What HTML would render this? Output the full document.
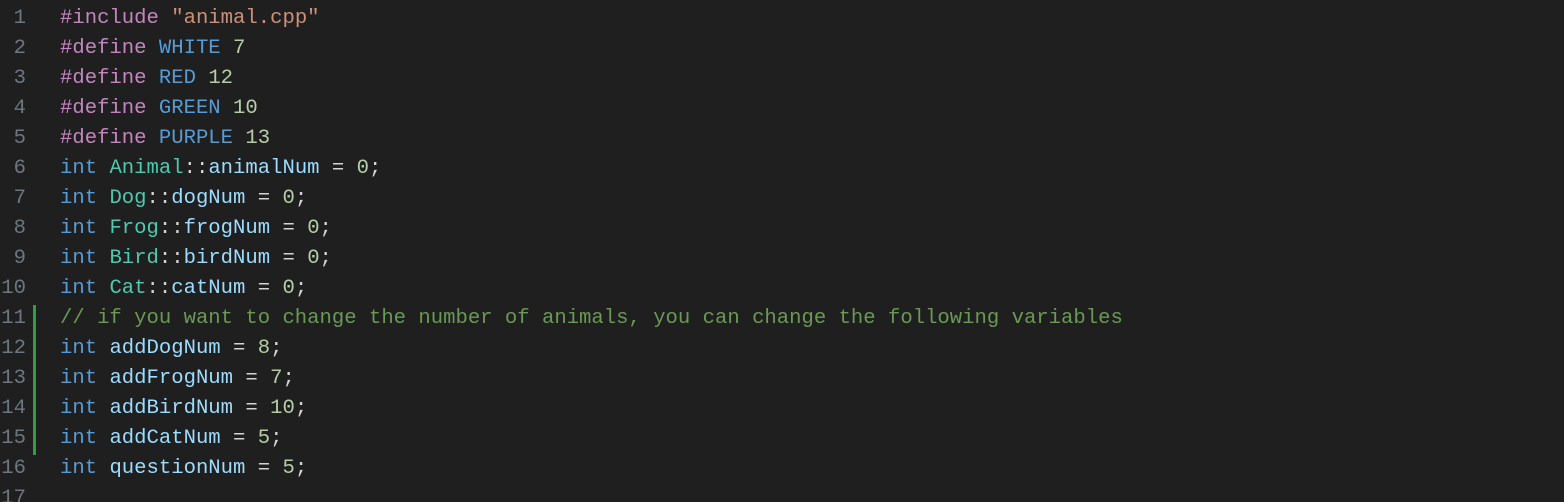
<!DOCTYPE html>
<html><head><style>
html,body{margin:0;padding:0;background:#1f1f1f;width:1564px;height:502px;overflow:hidden}
.ed{position:relative;font-family:"Liberation Mono","DejaVu Sans Mono",monospace;font-size:20.6px;}
.ln{position:absolute;left:0;width:26px;text-align:right;color:#6e7681;height:30px;line-height:30px;white-space:pre}
.c{position:absolute;left:60px;height:30px;line-height:30px;white-space:pre;color:#d4d4d4}
.p{color:#c586c0}.s{color:#ce9178}.m{color:#569cd6}.n{color:#b5cea8}.k{color:#569cd6}.t{color:#4ec9b0}.v{color:#9cdcfe}.g{color:#6a9955}
.bar{position:absolute;left:33px;top:305px;width:3px;height:150px;background:#2ea043}
</style></head><body><div class="ed">
<div class="bar"></div>
<div class="ln" style="top:4px">1</div><div class="c" style="top:4px"><span class="p">#include</span> <span class="s">"animal.cpp"</span></div>
<div class="ln" style="top:34px">2</div><div class="c" style="top:34px"><span class="p">#define</span> <span class="m">WHITE</span> <span class="n">7</span></div>
<div class="ln" style="top:64px">3</div><div class="c" style="top:64px"><span class="p">#define</span> <span class="m">RED</span> <span class="n">12</span></div>
<div class="ln" style="top:94px">4</div><div class="c" style="top:94px"><span class="p">#define</span> <span class="m">GREEN</span> <span class="n">10</span></div>
<div class="ln" style="top:124px">5</div><div class="c" style="top:124px"><span class="p">#define</span> <span class="m">PURPLE</span> <span class="n">13</span></div>
<div class="ln" style="top:154px">6</div><div class="c" style="top:154px"><span class="k">int</span> <span class="t">Animal</span>::<span class="v">animalNum</span> = <span class="n">0</span>;</div>
<div class="ln" style="top:184px">7</div><div class="c" style="top:184px"><span class="k">int</span> <span class="t">Dog</span>::<span class="v">dogNum</span> = <span class="n">0</span>;</div>
<div class="ln" style="top:214px">8</div><div class="c" style="top:214px"><span class="k">int</span> <span class="t">Frog</span>::<span class="v">frogNum</span> = <span class="n">0</span>;</div>
<div class="ln" style="top:244px">9</div><div class="c" style="top:244px"><span class="k">int</span> <span class="t">Bird</span>::<span class="v">birdNum</span> = <span class="n">0</span>;</div>
<div class="ln" style="top:274px">10</div><div class="c" style="top:274px"><span class="k">int</span> <span class="t">Cat</span>::<span class="v">catNum</span> = <span class="n">0</span>;</div>
<div class="ln" style="top:304px">11</div><div class="c" style="top:304px"><span class="g">// if you want to change the number of animals, you can change the following variables</span></div>
<div class="ln" style="top:334px">12</div><div class="c" style="top:334px"><span class="k">int</span> <span class="v">addDogNum</span> = <span class="n">8</span>;</div>
<div class="ln" style="top:364px">13</div><div class="c" style="top:364px"><span class="k">int</span> <span class="v">addFrogNum</span> = <span class="n">7</span>;</div>
<div class="ln" style="top:394px">14</div><div class="c" style="top:394px"><span class="k">int</span> <span class="v">addBirdNum</span> = <span class="n">10</span>;</div>
<div class="ln" style="top:424px">15</div><div class="c" style="top:424px"><span class="k">int</span> <span class="v">addCatNum</span> = <span class="n">5</span>;</div>
<div class="ln" style="top:454px">16</div><div class="c" style="top:454px"><span class="k">int</span> <span class="v">questionNum</span> = <span class="n">5</span>;</div>
<div class="ln" style="top:484px">17</div>
</div></body></html>
